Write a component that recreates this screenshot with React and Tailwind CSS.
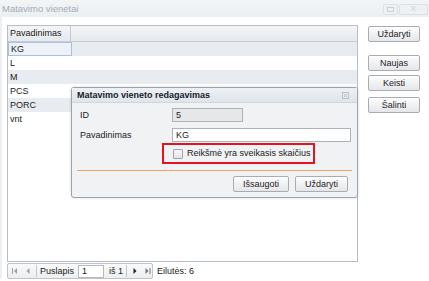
import React from "react";

function Btn({ children, className = "" }) {
  return (
    <div
      className={
        "flex items-center justify-center h-[16px] border border-[#a9adb3] rounded-[2px] bg-gradient-to-b from-[#fdfdfd] to-[#e4e6e9] text-[#1f2328] shadow-[inset_0_1px_0_#ffffff] " +
        className
      }
    >
      {children}
    </div>
  );
}

const rows = ["KG", "L", "M", "PCS", "PORC", "vnt"];

export default function App() {
  return (
    <div className="w-[429px] h-[281px] relative overflow-hidden bg-white font-['Liberation_Sans',Arial,sans-serif] text-[9px] leading-none text-[#1e1e1e]">
      {/* window title bar */}
      <div className="h-[17px] bg-gradient-to-b from-[#f2f4f6] to-[#eceff2] flex items-center justify-between pl-[2px] pr-[1px]">
        <span className="text-[9.5px] text-[#a4acb6]">Matavimo vienetai</span>
        <div className="flex gap-[1px] pt-[1px]">
          <div className="w-[15px] h-[11px] border border-[#dde1e6] rounded-[2px] bg-[#eef1f4] flex items-center justify-center">
            <div className="w-[7px] h-[5px] border border-[#c9d0d8]" />
          </div>
          <div className="w-[29px] h-[11px] border border-[#dde1e6] rounded-[2px] bg-[#eef1f4] flex items-center justify-center text-[8px] text-[#c9d0d8]">
            X
          </div>
        </div>
      </div>

      {/* window body */}
      <div className="flex pl-[7px] pt-[8px] border-l-2 border-[#eef0f3] -ml-0">
        <div className="w-[351px] flex flex-col -ml-[2px]">
          {/* grid */}
          <div className="h-[237px] border border-[#b7bec8] flex flex-col bg-white">
            <div className="h-[16px] flex border-b border-[#c5cbd3] bg-gradient-to-b from-[#f4f5f7] to-[#e6e9ed] shrink-0">
              <div className="w-[63px] border-r border-[#c5cbd3] flex items-center pl-[2px] text-[#222]">
                Pavadinimas
              </div>
              <div className="flex-1" />
            </div>
            {rows.map((r, i) => (
              <div
                key={r}
                className={
                  "h-[14px] flex shrink-0 " + (i % 2 === 0 ? "bg-[#e8ebef]" : "bg-white")
                }
              >
                <div
                  className={
                    "w-[64px] flex items-center pl-[2px] text-[#222] " +
                    (i === 0 ? "border border-[#a9c2e2] bg-[#eef1f5]" : "")
                  }
                >
                  {r}
                </div>
                <div className="flex-1" />
              </div>
            ))}
          </div>
          {/* paging toolbar */}
          <div className="flex items-center mt-[1px]">
            <div className="w-[146px] h-[16px] border border-[#bfc4ca] rounded-[2px] bg-gradient-to-b from-[#fafafa] to-[#eceef0] flex items-center text-[#222]">
              <svg width="6" height="6" viewBox="0 0 6 6" className="ml-[4px]">
                <rect x="0" y="0" width="1" height="6" fill="#9aa0a8" />
                <path d="M5 0 L2 3 L5 6 Z" fill="#9aa0a8" />
              </svg>
              <svg width="4" height="6" viewBox="0 0 4 6" className="ml-[8px]">
                <path d="M3.5 0 L0.5 3 L3.5 6 Z" fill="#9aa0a8" />
              </svg>
              <div className="ml-[6px] w-px h-[12px] bg-[#c3c7cc]" />
              <span className="ml-[3px]">Puslapis</span>
              <div className="ml-[4px] w-[26px] h-[13px] border border-[#b5bac0] bg-white flex items-center pl-[3px]">
                1
              </div>
              <span className="ml-[5px]">iš 1</span>
              <div className="ml-[3px] w-px h-[12px] bg-[#c3c7cc]" />
              <svg width="4" height="6" viewBox="0 0 4 6" className="ml-[6px]">
                <path d="M0.5 0 L3.5 3 L0.5 6 Z" fill="#222" />
              </svg>
              <svg width="6" height="6" viewBox="0 0 6 6" className="ml-[8px]">
                <path d="M0.5 0 L3.5 3 L0.5 6 Z" fill="#6d737a" />
                <rect x="4.5" y="0" width="1" height="6" fill="#6d737a" />
              </svg>
            </div>
            <span className="ml-[4px] text-[#222]">Eilutės: 6</span>
          </div>
        </div>

        {/* right buttons */}
        <div className="ml-[10px] w-[52px] flex flex-col pt-[1px]">
          <Btn>Uždaryti</Btn>
          <Btn className="mt-[13px]">Naujas</Btn>
          <Btn className="mt-[4px]">Keisti</Btn>
          <Btn className="mt-[6px]">Šalinti</Btn>
        </div>
      </div>

      {/* modal dialog */}
      <div className="absolute left-[71px] top-[87px] w-[287px] h-[111px] border border-[#9aa4b0] rounded-[3px] bg-[#f1f2f4] flex flex-col shadow-[0_0_3px_rgba(0,0,0,0.15)]">
        <div className="h-[15px] shrink-0 flex items-center justify-between pl-[5px] pr-[8px] bg-gradient-to-b from-[#eef1f4] to-[#e0e5eb] border-b border-[#d0d6dd]">
          <span className="font-bold text-[#16202b] text-[9px]">Matavimo vieneto redagavimas</span>
          <svg width="7" height="7" viewBox="0 0 7 7">
            <rect x="0.5" y="0.5" width="6" height="6" fill="none" stroke="#b9c0c8" />
            <path d="M2 2 L5 5 M5 2 L2 5" stroke="#b9c0c8" strokeWidth="1" />
          </svg>
        </div>
        <div className="flex flex-col pt-[5px]">
          <div className="flex items-center h-[14px]">
            <span className="w-[100px] pl-[8px] text-[#222]">ID</span>
            <div className="w-[71px] h-[14px] border border-[#aeb3b9] bg-[#e6e7e9] flex items-center pl-[3px] text-[#222]">
              5
            </div>
          </div>
          <div className="flex items-center h-[14px] mt-[6px]">
            <span className="w-[100px] pl-[8px] text-[#222]">Pavadinimas</span>
            <div className="w-[179px] h-[14px] border border-[#aeb3b9] bg-white flex items-center pl-[3px] text-[#222]">
              KG
            </div>
          </div>
          <div className="ml-[90px] mt-[1px] w-[153px] h-[21px] border-2 border-[#e3141c] flex items-center pl-[9px]">
            <div className="w-[10px] h-[10px] border border-[#9ea4ab] rounded-[1px] bg-gradient-to-b from-[#f6f7f8] to-[#e2e4e7]" />
            <span className="ml-[4px] text-[#222]">Reikšmė yra sveikasis skaičius</span>
          </div>
          <div className="mx-[5px] mt-[6px] h-px bg-[#f0a25e]" />
          <div className="flex justify-end pr-[9px] mt-[5px] gap-[6px]">
            <Btn className="w-[56px]">Išsaugoti</Btn>
            <Btn className="w-[53px]">Uždaryti</Btn>
          </div>
        </div>
      </div>
    </div>
  );
}
